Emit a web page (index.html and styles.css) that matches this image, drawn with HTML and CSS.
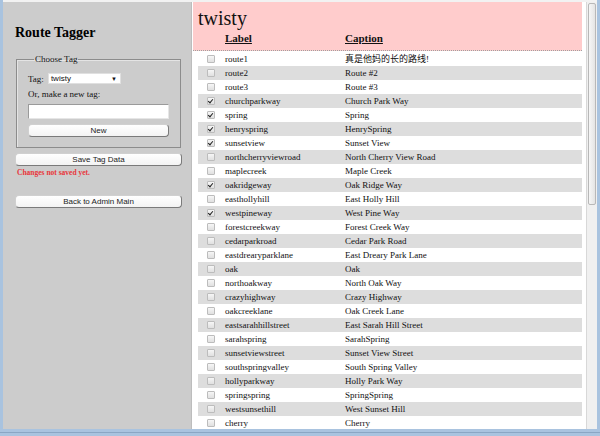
FILE: index.html
```html
<!DOCTYPE html>
<html>
<head>
<meta charset="utf-8">
<link rel="stylesheet" href="styles.css">
</head>
<body>
<div class="frame">
  <div class="window">
    <div class="left">
      <h1 class="title">Route Tagger</h1>
      <fieldset class="choose">
        <legend>Choose Tag</legend>
        <div class="tagrow">
          <span>Tag:</span>
          <div class="select"><span>twisty</span><span class="arrow">▼</span></div>
        </div>
        <div class="ortext">Or, make a new tag:</div>
        <div class="input"></div>
        <div class="btn newbtn">New</div>
      </fieldset>
      <div class="btn wide savebtn">Save Tag Data</div>
      <div class="warn">Changes not saved yet.</div>
      <div class="btn wide backbtn">Back to Admin Main</div>
    </div>
    <div class="main">
      <div class="header">
        <div class="tagname">twisty</div>
        <div class="cols">
          <span></span><span class="colhead">Label</span><span class="colhead">Caption</span>
        </div>
      </div>
      <div class="rows">
        <div class="row"><span class="cb"></span><span>route1</span><span class="cjk">真是他妈的长的路线!</span></div>
        <div class="row"><span class="cb"></span><span>route2</span><span>Route #2</span></div>
        <div class="row"><span class="cb"></span><span>route3</span><span>Route #3</span></div>
        <div class="row"><span class="cb on"></span><span>churchparkway</span><span>Church Park Way</span></div>
        <div class="row"><span class="cb on"></span><span>spring</span><span>Spring</span></div>
        <div class="row"><span class="cb on"></span><span>henryspring</span><span>HenrySpring</span></div>
        <div class="row"><span class="cb on"></span><span>sunsetview</span><span>Sunset View</span></div>
        <div class="row"><span class="cb"></span><span>northcherryviewroad</span><span>North Cherry View Road</span></div>
        <div class="row"><span class="cb"></span><span>maplecreek</span><span>Maple Creek</span></div>
        <div class="row"><span class="cb on"></span><span>oakridgeway</span><span>Oak Ridge Way</span></div>
        <div class="row"><span class="cb"></span><span>easthollyhill</span><span>East Holly Hill</span></div>
        <div class="row"><span class="cb on"></span><span>westpineway</span><span>West Pine Way</span></div>
        <div class="row"><span class="cb"></span><span>forestcreekway</span><span>Forest Creek Way</span></div>
        <div class="row"><span class="cb"></span><span>cedarparkroad</span><span>Cedar Park Road</span></div>
        <div class="row"><span class="cb"></span><span>eastdrearyparklane</span><span>East Dreary Park Lane</span></div>
        <div class="row"><span class="cb"></span><span>oak</span><span>Oak</span></div>
        <div class="row"><span class="cb"></span><span>northoakway</span><span>North Oak Way</span></div>
        <div class="row"><span class="cb"></span><span>crazyhighway</span><span>Crazy Highway</span></div>
        <div class="row"><span class="cb"></span><span>oakcreeklane</span><span>Oak Creek Lane</span></div>
        <div class="row"><span class="cb"></span><span>eastsarahhillstreet</span><span>East Sarah Hill Street</span></div>
        <div class="row"><span class="cb"></span><span>sarahspring</span><span>SarahSpring</span></div>
        <div class="row"><span class="cb"></span><span>sunsetviewstreet</span><span>Sunset View Street</span></div>
        <div class="row"><span class="cb"></span><span>southspringvalley</span><span>South Spring Valley</span></div>
        <div class="row"><span class="cb"></span><span>hollyparkway</span><span>Holly Park Way</span></div>
        <div class="row"><span class="cb"></span><span>springspring</span><span>SpringSpring</span></div>
        <div class="row"><span class="cb"></span><span>westsunsethill</span><span>West Sunset Hill</span></div>
        <div class="row"><span class="cb"></span><span>cherry</span><span>Cherry</span></div>
      </div>
    </div>
    <div class="scroll"><div class="thumb"></div></div>
  </div>
</div>
</body>
</html>
```

FILE: styles.css
```css
html, body {
  margin: 0;
  padding: 0;
}
body {
  width: 600px;
  height: 436px;
  overflow: hidden;
  background: #a9c3df;
  font-family: "Liberation Serif", "Times New Roman", serif;
  color: #111;
}
.frame {
  height: 436px;
  padding: 0 3px 7px 3px;
  box-sizing: border-box;
  box-shadow: inset 0 -3px 0 #a9c3df, inset 0 -4px 0 #8aa6c4;
}
.window {
  display: flex;
  height: 429px;
  border-top: 2px solid #f2f2f2;
  box-sizing: border-box;
  background: #fff;
  overflow: hidden;
}
.left {
  width: 189px;
  flex: none;
  background: #cccccc;
  border-right: 1px solid #bdbdbd;
  box-sizing: border-box;
  padding: 23px 9px 0 12px;
}
.title {
  margin: 0;
  font-size: 14px;
  line-height: 16px;
  font-weight: bold;
  color: #000;
}
.choose {
  margin: 13px 0 0 1px;
  width: 165px;
  box-sizing: border-box;
  border: 1px solid #8c8c8c;
  box-shadow: inset 1px 1px 0 #e4e4e4;
  padding: 8px 10px 10px 11px;
  font-size: 9px;
}
.choose legend {
  font-size: 9px;
  line-height: 11px;
  padding: 0 1px;
  margin-left: 6px;
}
.tagrow {
  display: flex;
  align-items: center;
  gap: 4px;
  height: 11px;
}
.select {
  width: 73px;
  height: 11px;
  box-sizing: border-box;
  background: #fff;
  border: 1px solid #e0e0e0;
  display: flex;
  justify-content: space-between;
  align-items: center;
  padding: 0 3px 0 2px;
  font-family: "Liberation Sans", Arial, sans-serif;
  font-size: 8px;
}
.arrow {
  font-size: 6px;
}
.ortext {
  margin-top: 5px;
  line-height: 11px;
}
.input {
  margin-top: 4px;
  height: 15px;
  width: 141px;
  box-sizing: border-box;
  background: #fff;
  border: 1px solid #9a9a9a;
  border-right-color: #e6e6e6;
  border-bottom-color: #e6e6e6;
}
.btn {
  height: 13px;
  box-sizing: border-box;
  background: linear-gradient(#ffffff, #f3f3f3);
  border: 1px solid #d0d0d0;
  border-right-color: #7a7a7a;
  border-bottom-color: #7a7a7a;
  border-radius: 4px;
  font-family: "Liberation Sans", Arial, sans-serif;
  font-size: 8px;
  line-height: 11px;
  text-align: center;
  color: #222;
}
.newbtn {
  margin-top: 5px;
  width: 141px;
}
.wide {
  width: 167px;
}
.savebtn {
  margin-top: 5px;
}
.warn {
  margin-top: 3px;
  font-size: 7.5px;
  line-height: 8px;
  font-weight: bold;
  color: #e8353a;
  padding-left: 2px;
}
.backbtn {
  margin-top: 18px;
}
.main {
  width: 394px;
  flex: none;
  padding: 0 4px 0 1px;
  box-sizing: border-box;
  background: #fff;
}
.header {
  background: #ffcccc;
  padding: 4px 0 5px 5px;
  border-bottom: 1px dotted #a0a0a0;
}
.tagname {
  font-size: 20px;
  line-height: 24px;
  color: #111;
}
.cols, .row {
  display: grid;
  grid-template-columns: 27px 120px 1fr;
  align-items: center;
}
.cols {
  height: 15px;
}
.colhead {
  font-size: 11px;
  font-weight: bold;
  text-decoration: underline;
}
.rows {
  margin: 1px 0 0 5px;
}
.row {
  height: 14px;
  font-size: 9px;
  line-height: 14px;
}
.row:nth-child(even) {
  background: #dddddd;
}
.cjk {
  font-family: "Liberation Serif", "Noto Sans CJK SC", serif;
}
.cb {
  width: 8px;
  height: 8px;
  margin-left: 9px;
  box-sizing: border-box;
  border: 1px solid #bcbcbc;
  border-radius: 1px;
  background: linear-gradient(#f6f6f6, #e0e0e0);
  position: relative;
}
.cb.on::after {
  content: "";
  position: absolute;
  left: 1px;
  top: 0px;
  width: 2px;
  height: 4px;
  border-right: 1.3px solid #222;
  border-bottom: 1.3px solid #222;
  transform: rotate(40deg);
}
.scroll {
  width: 11px;
  flex: none;
  background: #f0f0f0;
  border-left: 1px solid #d8d8d8;
  box-sizing: border-box;
  padding: 1px;
}
.thumb {
  height: 200px;
  background: linear-gradient(90deg, #f6f6f6, #e4e4e4);
  border: 1px solid #b8b8b8;
  border-radius: 2px;
}
```
